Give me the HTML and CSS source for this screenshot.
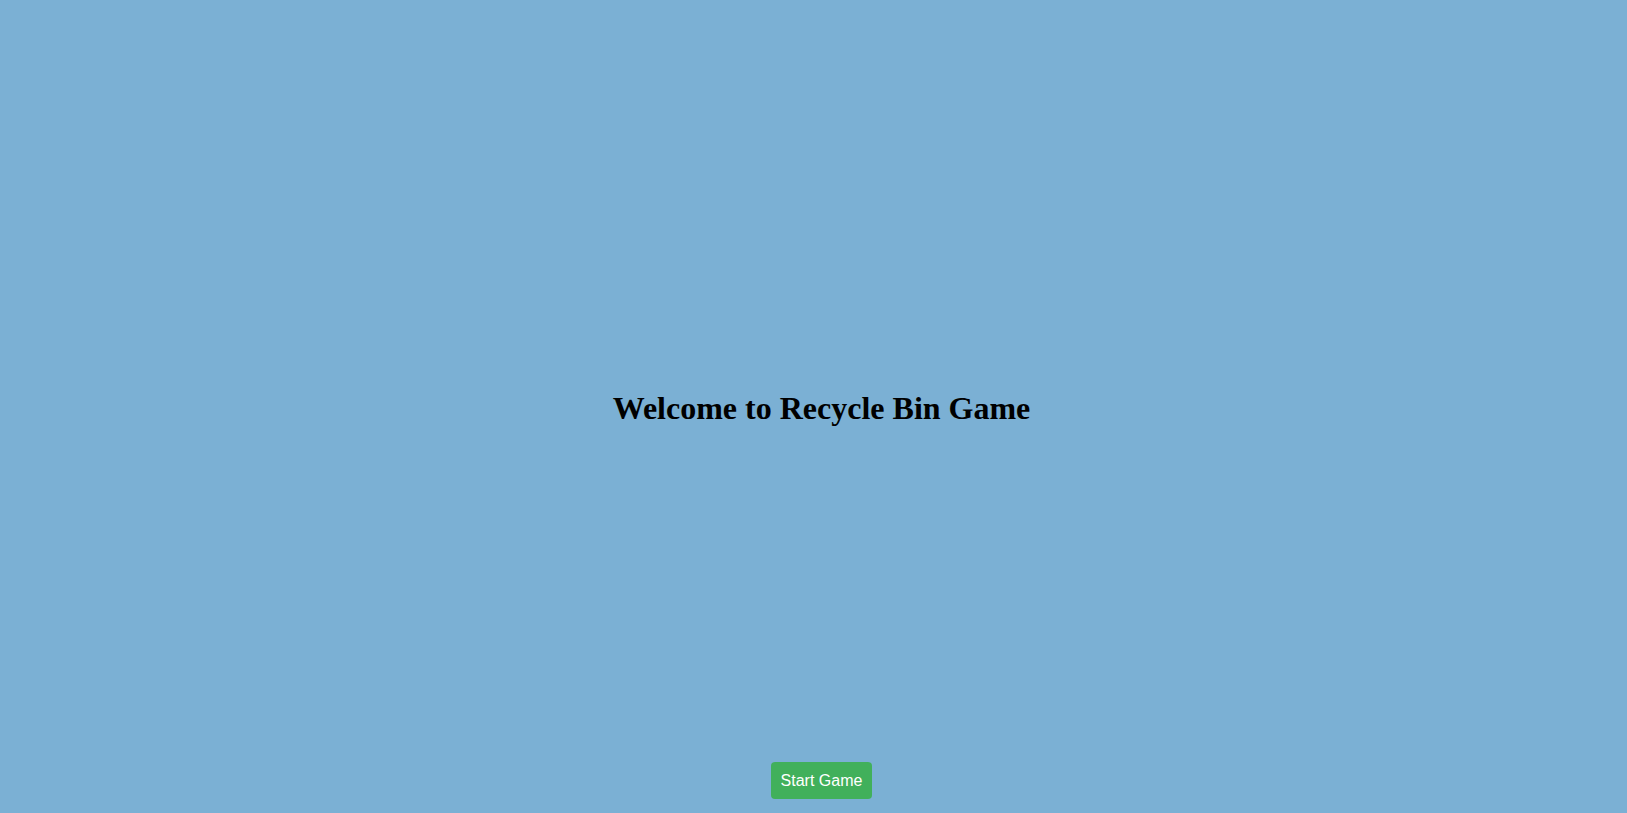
FILE: index.html
```html
<!DOCTYPE html>
<html>
<head>
<meta charset="utf-8">
<link rel="stylesheet" href="styles.css">
</head>
<body>
<div class="page">
  <div class="hero"><h1 class="title">Welcome to Recycle Bin Game</h1></div>
  <div class="actions"><button class="start">Start Game</button></div>
</div>
</body>
</html>
```
FILE: styles.css
```css
html, body { margin: 0; padding: 0; }
body { background: #7bb0d4; font-family: "Liberation Serif", "Times New Roman", serif; overflow: hidden; }
.page { height: 813px; display: flex; flex-direction: column; padding-left: 16px; box-sizing: border-box; }
.hero { flex: 1; display: flex; align-items: center; justify-content: center; padding-top: 55px; }
.title { margin: 0; font-size: 32px; font-weight: bold; color: #000; }
.actions { display: flex; justify-content: center; padding-bottom: 14px; }
.start { background: #41b05b; color: #fff; border: none; border-radius: 4px; font-family: "Liberation Sans", Arial, sans-serif; font-size: 16px; width: 101px; height: 37px; padding: 0; }
```
